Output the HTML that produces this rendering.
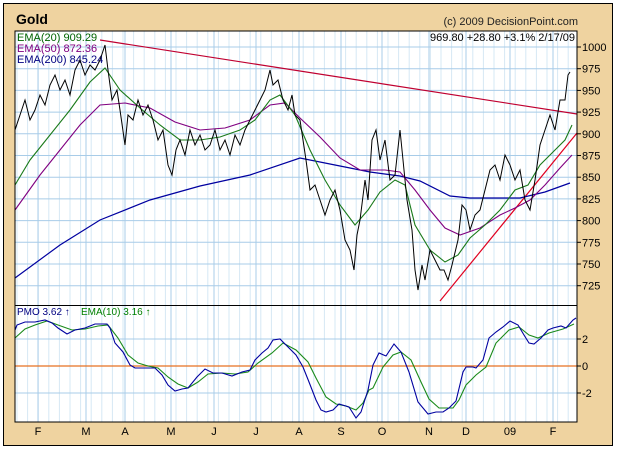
<!DOCTYPE html><html><head><style>
body{margin:0;background:#fff}
svg text{font-family:"Liberation Sans",sans-serif}
</style></head><body>
<svg id="s" width="618" height="450" xmlns="http://www.w3.org/2000/svg">
<rect x="0" y="0" width="618" height="450" fill="#fff"/>
<rect x="3.5" y="3.5" width="609" height="442" fill="#EFD3A0" stroke="#000"/>
<rect x="15" y="31" width="562" height="391" fill="#fff"/>
<g id="grid"></g>
<line x1="15" y1="366" x2="577" y2="366" stroke="#E87020" stroke-width="1.2"/>
<text x="16" y="24" font-size="14" font-weight="bold">Gold</text>
<text x="578" y="25" font-size="11" text-anchor="end" fill="#222">(c) 2009 DecisionPoint.com</text>
<text x="575" y="41" font-size="11" text-anchor="end">969.80  +28.80  +3.1%  2/17/09</text>
<text x="17" y="41" font-size="11" fill="#006400">EMA(20) 909.29</text>
<text x="17" y="52" font-size="11" fill="#800080">EMA(50) 872.36</text>
<text x="17" y="63" font-size="11" fill="#000080">EMA(200) 845.24</text>
<text x="17" y="315" font-size="10" fill="#000080">PMO  3.62 ↑</text>
<text x="81" y="315" font-size="10" fill="#008000">EMA(10)  3.16 ↑</text>
<polyline fill="none" stroke="#C00030" stroke-width="1.2" points="100,40 577,114"/>
<polyline fill="none" stroke="#E00020" stroke-width="1.2" points="440,301 577,133"/>
<polyline fill="none" stroke="#0000A0" stroke-width="1.2" points="15,278 60,245 100,220 150,200 200,186 250,175 300,158 340,166 370,172 400,176 420,181 450,196 470,198 500,198 520,198 545,192 570,183"/>
<polyline fill="none" stroke="#800080" stroke-width="1.1" points="15,210 40,175 60,150 80,125 100,105 125,103 150,108 175,122 200,130 225,128 250,120 270,105 285,103 300,118 320,137 340,158 360,170 385,170 400,172 415,190 430,210 445,228 460,235 480,228 500,215 515,208 530,200 545,185 560,168 572,155"/>
<polyline fill="none" stroke="#1A7A1A" stroke-width="1.1" points="15,185 30,160 50,135 70,110 90,82 105,68 120,90 140,108 160,125 180,140 200,140 220,137 240,130 255,120 270,100 280,95 295,115 310,150 325,180 340,205 355,225 368,210 380,192 395,180 405,185 415,225 430,250 445,262 458,255 470,238 485,225 500,210 515,190 528,185 540,165 555,150 565,140 572,125"/>
<polyline fill="none" stroke="#000" stroke-width="1" points="15,130 20,115 25,100 30,120 35,110 40,95 45,105 50,85 55,75 60,90 65,80 70,95 75,70 80,60 85,75 90,65 95,70 100,60 105,45 108,70 112,100 117,90 120,110 125,145 128,115 133,120 138,100 143,115 148,105 153,120 158,140 163,130 168,165 172,175 176,150 180,140 185,155 190,130 195,145 200,135 205,150 210,145 215,130 220,150 225,140 230,155 235,135 240,145 245,130 250,120 255,110 260,100 265,90 270,70 273,85 278,80 283,100 288,110 292,95 295,115 300,120 303,140 306,160 310,190 315,185 320,200 325,215 330,200 335,190 340,210 345,240 350,250 354,270 357,235 360,220 365,180 368,200 372,140 376,130 380,160 385,140 390,180 395,175 400,130 403,160 407,200 412,230 415,270 418,290 422,265 425,280 430,250 435,260 440,270 444,270 448,280 452,265 458,240 462,205 466,210 470,230 475,215 480,210 485,190 490,170 495,165 500,180 505,155 510,165 515,180 520,170 525,200 530,210 535,180 540,145 545,130 550,115 555,130 560,100 565,100 568,75 570,72"/>
<polyline fill="none" stroke="#1A8A1A" stroke-width="1.1" points="15,338 25,329 35,325 47,321 58,325 72,330 85,329 98,326 108,325 118,338 128,355 138,363 148,366 158,368 168,377 178,384 188,388 198,382 208,374 222,373 235,374 248,372 258,363 272,353 283,343 296,350 308,362 316,378 326,397 336,404 346,406 356,410 363,403 369,390 373,388 383,367 393,355 401,352 411,360 421,382 429,399 439,408 453,408 459,400 466,385 476,375 486,367 496,343 509,330 519,327 529,335 538,338 549,333 563,329 574,324"/>
<polyline fill="none" stroke="#0000A0" stroke-width="1.1" points="15,330 17,325 25,322 35,322 45,320 52,323 58,328 67,334 75,330 85,328 95,324 107,324 110,328 115,343 123,352 130,365 135,368 147,368 155,368 162,375 168,385 175,391 182,389 188,388 197,377 205,369 213,373 222,373 232,376 242,372 250,370 255,360 262,353 268,348 273,340 280,339 285,344 296,355 303,367 309,382 316,400 321,410 326,412 333,410 339,404 349,407 356,418 361,412 368,390 373,365 379,353 386,356 394,344 401,352 409,372 418,402 428,414 436,412 443,412 449,408 456,401 463,372 466,367 473,367 476,368 483,360 489,338 496,332 503,327 510,321 518,325 524,335 529,343 534,344 541,338 548,330 553,328 561,326 566,328 573,320 576,318"/>
<line x1="15" y1="305.5" x2="577" y2="305.5" stroke="#000"/>
<rect x="15" y="31" width="562" height="391" fill="none" stroke="#000"/>
<g id="lab" font-size="11" fill="#000"></g>
</svg>
<script>
var ns="http://www.w3.org/2000/svg",g=document.getElementById('grid'),lab=document.getElementById('lab');
function el(p,t,a){var e=document.createElementNS(ns,t);for(var k in a)e.setAttribute(k,a[k]);p.appendChild(e);return e}
var months=[[38,'F'],[86,'M'],[125,'A'],[171,'M'],[214,'J'],[256,'J'],[299,'A'],[341,'S'],[382,'O'],[429,'N'],[466,'D'],[510,'09'],[553,'F']];
for(var x=17;x<577;x+=10.6)el(g,'line',{x1:x,y1:31,x2:x,y2:422,stroke:'#D6E8F4'});
months.forEach(function(m){el(g,'line',{x1:m[0],y1:31,x2:m[0],y2:422,stroke:'#A8CCE8'});
var t=el(lab,'text',{x:m[0],y:435,'text-anchor':'middle'});t.textContent=m[1];});
for(var i=0;i<12;i++){var y=47+i*21.7;el(g,'line',{x1:15,y1:y,x2:577,y2:y,stroke:'#A8CCE8'});
el(lab,'line',{x1:577,y1:y,x2:581,y2:y,stroke:'#000'});
var t=el(lab,'text',{x:582,y:y+4});t.textContent=1000-25*i;}
[[339,'2'],[366,'0'],[393,'-2']].forEach(function(a){el(g,'line',{x1:15,y1:a[0],x2:577,y2:a[0],stroke:'#A8CCE8'});
el(lab,'line',{x1:577,y1:a[0],x2:581,y2:a[0],stroke:'#000'});var t=el(lab,'text',{x:582,y:a[0]+4});t.textContent=a[1];});
</script>
</body></html>
